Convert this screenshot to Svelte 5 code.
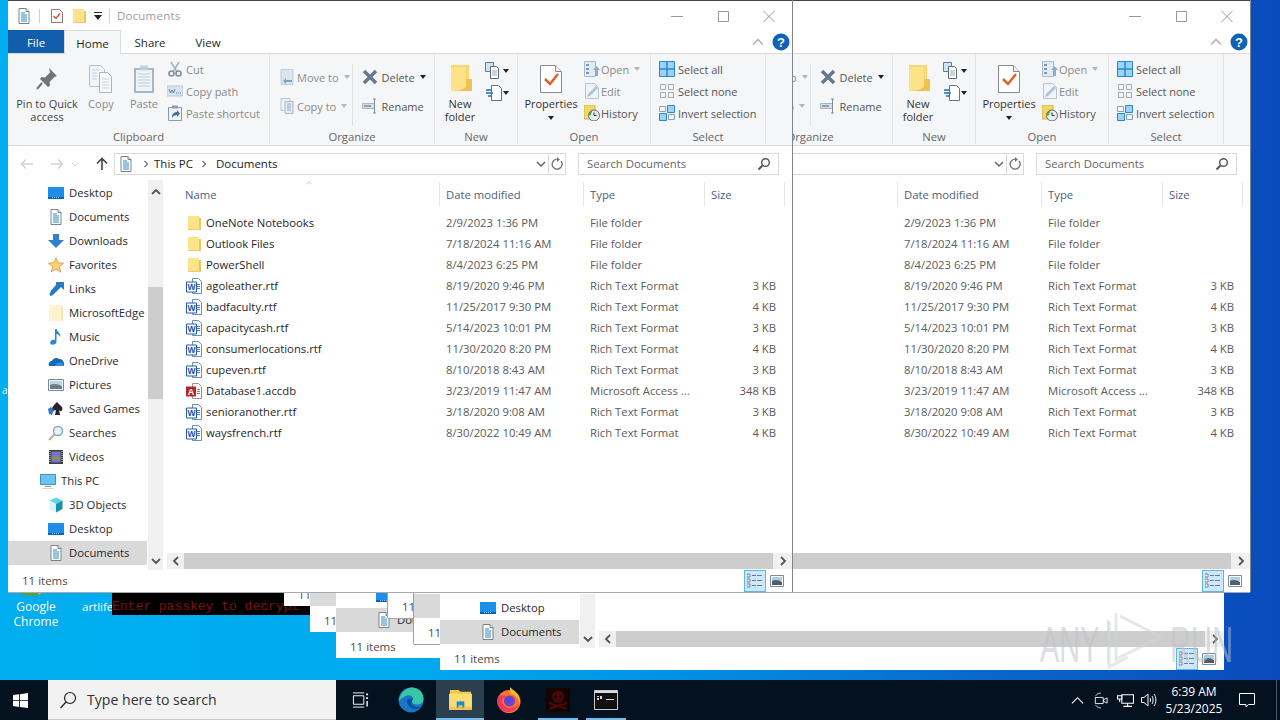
<script>
  // cascade of explorer windows, back to front.
  // lite: only the bottom strip shows below the big windows, back: sits behind the front one
  const windows = [
    { x: 284, y: 14, cls: 'lite', lite: true },
    { x: 310, y: 40, cls: 'lite', lite: true },
    { x: 336, y: 66, cls: 'lite', lite: true },
    { x: 388, y: 26, cls: 'lite edged', lite: true },
    { x: 414, y: 52, cls: 'lite edged', lite: true },
    { x: 440, y: 78, cls: 'lite', lite: true },
    { x: 466, y: 0, cls: 'top', back: true },
    { x: 8, y: 0, cls: 'top' }
  ];

  const navItems = [
    { label: 'Desktop', icon: 'i-desktop' },
    { label: 'Documents', icon: 'i-doc' },
    { label: 'Downloads', icon: 'i-down' },
    { label: 'Favorites', icon: 'i-star' },
    { label: 'Links', icon: 'i-links' },
    { label: 'MicrosoftEdge', icon: 'i-paleFolder' },
    { label: 'Music', icon: 'i-music' },
    { label: 'OneDrive', icon: 'i-cloud' },
    { label: 'Pictures', icon: 'i-pictures' },
    { label: 'Saved Games', icon: 'i-games' },
    { label: 'Searches', icon: 'i-search2' },
    { label: 'Videos', icon: 'i-videos' },
    { label: 'This PC', icon: 'i-pc', root: true },
    { label: '3D Objects', icon: 'i-cube' },
    { label: 'Desktop', icon: 'i-desktop' },
    { label: 'Documents', icon: 'i-doc', selected: true }
  ];

  const rtf = 'Rich Text Format';
  const files = [
    { name: 'OneNote Notebooks', date: '2/9/2023 1:36 PM', type: 'File folder', size: '', icon: 'i-folder' },
    { name: 'Outlook Files', date: '7/18/2024 11:16 AM', type: 'File folder', size: '', icon: 'i-folder' },
    { name: 'PowerShell', date: '8/4/2023 6:25 PM', type: 'File folder', size: '', icon: 'i-folder' },
    { name: 'agoleather.rtf', date: '8/19/2020 9:46 PM', type: rtf, size: '3 KB', icon: 'i-rtf' },
    { name: 'badfaculty.rtf', date: '11/25/2017 9:30 PM', type: rtf, size: '4 KB', icon: 'i-rtf' },
    { name: 'capacitycash.rtf', date: '5/14/2023 10:01 PM', type: rtf, size: '3 KB', icon: 'i-rtf' },
    { name: 'consumerlocations.rtf', date: '11/30/2020 8:20 PM', type: rtf, size: '4 KB', icon: 'i-rtf' },
    { name: 'cupeven.rtf', date: '8/10/2018 8:43 AM', type: rtf, size: '3 KB', icon: 'i-rtf' },
    { name: 'Database1.accdb', date: '3/23/2019 11:47 AM', type: 'Microsoft Access ...', size: '348 KB', icon: 'i-access' },
    { name: 'senioranother.rtf', date: '3/18/2020 9:08 AM', type: rtf, size: '3 KB', icon: 'i-rtf' },
    { name: 'waysfrench.rtf', date: '8/30/2022 10:49 AM', type: rtf, size: '4 KB', icon: 'i-rtf' }
  ];
</script>

{#snippet ic(name, w, h = w)}
  <svg class="ic" width={w} height={h}><use href={'#' + name} /></svg>
{/snippet}

{#snippet smallBtn(icon, label)}
  <div class="small">
    <span class="small-ic">{@render ic(icon, 16)}</span>
    <span>{label}</span>
  </div>
{/snippet}

{#snippet explorer(w)}
  <section class="win {w.cls}" style="left:{w.x}px;top:{w.y}px">
    {#if !w.lite}
      <header class="title">
        {#if !w.back}
          <span class="q first">{@render ic('i-doc', 16)}</span>
          <i class="tsep a"></i>
          <span class="q">{@render ic('i-check', 16)}</span>
          <span class="q">{@render ic('i-folder', 16)}</span>
          <span class="q qarrow">{@render ic('i-qat', 8)}</span>
          <i class="tsep"></i>
          <span class="title-text">Documents</span>
        {/if}
        <div class="controls">
          {@render ic('c-min', 46, 30)}
          {@render ic('c-max', 46, 30)}
          {@render ic('c-close', 46, 30)}
        </div>
      </header>

      <nav class="tabs">
        {#if !w.back}
          <span class="tab file">File</span>
          <span class="tab home">Home</span>
          <span class="tab">Share</span>
          <span class="tab">View</span>
        {/if}
        <span class="tabs-right">
          {@render ic('c-up', 12)}
          {@render ic('i-help', 18)}
        </span>
      </nav>

      <div class="ribbon">
        <div class="group g-clip">
          {#if !w.back}
            <div class="body">
              <div class="large w-pin">
                {@render ic('r-pin', 24, 30)}
                <span class="ll">Pin to Quick<br />access</span>
              </div>
              <div class="large w-copy dim">
                {@render ic('r-copy', 28, 30)}
                <span class="ll">Copy</span>
              </div>
              <div class="large w-paste dim">
                {@render ic('r-paste', 24, 30)}
                <span class="ll">Paste</span>
              </div>
              <div class="stack dim">
                {@render smallBtn('r-cut', 'Cut')}
                {@render smallBtn('r-path', 'Copy path')}
                {@render smallBtn('r-shortcut', 'Paste shortcut')}
              </div>
            </div>
            <div class="label">Clipboard</div>
          {/if}
        </div>

        <div class="group g-org">
          <div class="body">
            <div class="two dim col-move">
              <div class="small">{@render ic('r-move', 14, 16)}<span class="tx">Move to</span><span class="mini up"></span></div>
              <div class="small">{@render ic('r-copyto', 14, 16)}<span class="tx">Copy to</span><span class="mini up"></span></div>
            </div>
            <i class="inner-sep"></i>
            <div class="two col-del">
              <div class="small">{@render ic('r-del', 16)}<span class="tx">Delete</span><span class="mini"></span></div>
              <div class="small">{@render ic('r-rename', 16)}<span class="tx">Rename</span></div>
            </div>
          </div>
          <div class="label">Organize</div>
        </div>

        <div class="group g-new">
          <div class="body">
            <div class="large w-new">
              {@render ic('r-newfolder', 26, 30)}
              <span class="ll dark">New<br />folder</span>
            </div>
            <div class="newitems">
              <div class="ni">{@render ic('r-newitem', 18)}<span class="mini black"></span></div>
              <div class="ni">{@render ic('r-easy', 18)}<span class="mini black"></span></div>
            </div>
          </div>
          <div class="label">New</div>
        </div>

        <div class="group g-open">
          <div class="body">
            <div class="large w-prop">
              {@render ic('r-prop', 24, 30)}
              <span class="ll dark">Properties</span>
              <span class="mini black prop-arrow"></span>
            </div>
            <div class="stack">
              <div class="small dim"><span class="small-ic">{@render ic('r-open', 16)}</span><span>Open</span><span class="mini up"></span></div>
              <div class="small dim"><span class="small-ic">{@render ic('r-edit', 16)}</span><span>Edit</span></div>
              <div class="small"><span class="small-ic">{@render ic('r-history', 16)}</span><span>History</span></div>
            </div>
          </div>
          <div class="label">Open</div>
        </div>

        <div class="group g-select">
          <div class="body">
            <div class="stack">
              {@render smallBtn('r-all', 'Select all')}
              {@render smallBtn('r-none', 'Select none')}
              {@render smallBtn('r-invert', 'Invert selection')}
            </div>
          </div>
          <div class="label">Select</div>
        </div>
      </div>

      <div class="addr">
        <div class="arrows">
          {@render ic('a-back', 16)}
          {@render ic('a-fwd', 16)}
          {@render ic('a-drop', 10)}
          {@render ic('a-up', 16)}
        </div>
        <div class="crumb">
          {#if !w.back}
            {@render ic('i-doc', 16)}
            <span class="gt">{@render ic('a-gt', 8)}</span>
            <span>This PC</span>
            <span class="gt">{@render ic('a-gt', 8)}</span>
            <span>Documents</span>
          {/if}
          <span class="crumb-drop">{@render ic('a-chev', 12)}</span>
        </div>
        <div class="refresh">{@render ic('a-refresh', 14)}</div>
        <div class="search">
          <span>Search Documents</span>
          {@render ic('a-mag', 14)}
        </div>
      </div>
    {/if}

    <div class="main">
      <aside class="nav">
        {#each w.lite ? navItems.slice(-2) : w.back ? [] : navItems as item}
          <div class="nav-row" class:root={item.root} class:sel={item.selected}>
            {@render ic(item.icon, 16)}
            <span>{item.label}</span>
          </div>
        {/each}
      </aside>
      <div class="vscroll">
        <span class="sb-arrow vup">{@render ic('s-up', 10)}</span>
        <span class="vtrack"><i class="vthumb"></i></span>
        <span class="sb-arrow vdown">{@render ic('s-down', 10)}</span>
      </div>
      <div class="list">
        {#if !w.lite}
          <div class="list-head">
            <span class="col name-col">
              {#if !w.back}Name<i class="sort">{@render ic('c-up', 10, 6)}</i>{/if}
            </span>
            <span class="col">Date modified</span>
            <span class="col">Type</span>
            <span class="col">Size</span>
          </div>
        {/if}
        <div class="rows">
          {#each w.lite ? [] : files as f}
            <div class="row">
              <span class="name">
                {#if !w.back}{@render ic(f.icon, 16)}<span>{f.name}</span>{/if}
              </span>
              <span class="soft">{f.date}</span>
              <span class="soft">{f.type}</span>
              <span class="soft size">{f.size}</span>
            </div>
          {/each}
        </div>
        <div class="hscroll">
          <span class="sb-arrow h">{@render ic('s-left', 10)}</span>
          <span class="htrack"></span>
          <span class="sb-arrow h last">{@render ic('s-right', 10)}</span>
        </div>
      </div>
    </div>

    <footer class="status">
      <span class="count">11 items</span>
      <div class="views">
        <span class="view on">{@render ic('v-details', 16)}</span>
        <span class="view">{@render ic('v-large', 16)}</span>
      </div>
    </footer>
  </section>
{/snippet}

<svg class="sprite" width="0" height="0" aria-hidden="true">
  <defs>
    <symbol id="i-doc" viewBox="0 0 16 16">
      <path d="M3 .5h7l3 3v12H3z" fill="#fff" stroke="#76848f" />
      <path d="M10 .5v3h3" fill="#dfe6ec" stroke="#76848f" />
      <path d="M5 5h4M5 7h6M5 9h6M5 11h6M5 13h6" stroke="#2f86c9" />
    </symbol>
    <symbol id="i-check" viewBox="0 0 16 16">
      <path d="M2.5 1.5h8l3 3v10h-11z" fill="#fff" stroke="#8f7a7a" />
      <path d="M4.5 8L7 10.5l4-5" fill="none" stroke="#e0533c" stroke-width="1.5" />
    </symbol>
    <symbol id="i-qat" viewBox="0 0 8 8">
      <path d="M0 0h8v1H0zM0 3h8L4 8z" fill="#222" />
    </symbol>
    <symbol id="i-folder" viewBox="0 0 16 16">
      <path d="M2 1h11v14H2z" fill="#fde489" />
      <path d="M13 3h2v12h-2z" fill="#e8c866" />
      <path d="M2 14h13v1H2z" fill="#eacb6a" />
    </symbol>
    <symbol id="i-paleFolder" viewBox="0 0 16 16">
      <path d="M1 0h13v16H1z" fill="#fdf3cd" />
      <path d="M13 2h2v14h-2z" fill="#f3e6b9" />
    </symbol>
    <symbol id="i-desktop" viewBox="0 0 16 16">
      <path d="M0 2h16v12H0z" fill="#1c8fe8" />
      <path d="M0 12h16v2H0z" fill="#0e63b4" />
      <path d="M4 12.5h8" stroke="#8cc8f5" stroke-dasharray="1 1" />
    </symbol>
    <symbol id="i-down" viewBox="0 0 16 16">
      <path d="M5 1h6v6h5l-8 8-8-8h5z" fill="#2f80cf" />
    </symbol>
    <symbol id="i-star" viewBox="0 0 16 16">
      <path d="M8 .7l2.2 5 5.4.5-4.1 3.6 1.3 5.4L8 12.1 3.2 15l1.3-5.4L.4 6.2l5.4-.5z" fill="#fbd27a" stroke="#d99a3a" stroke-width=".8" />
    </symbol>
    <symbol id="i-links" viewBox="0 0 16 16">
      <path d="M8 1h8v8l-3-3-5 5c-2 2-3 3-5 4-1 0-2-1-1-3 1-3 4-6 6-8z" fill="#2878c4" />
    </symbol>
    <symbol id="i-music" viewBox="0 0 16 16">
      <path d="M7 0h1.5c.5 3 5 4 3.5 8-.5-2-2-3-3.500-3v8c0 2-3 3-5 2.500S2 12 4 11c1-.5 2-.5 3 0z" fill="#2b86d5" />
    </symbol>
    <symbol id="i-cloud" viewBox="0 0 16 16">
      <path d="M1 13c-1-3 1-5 3-5 1-3 5-4 7-2 2-.5 4 1 5 4v3z" fill="#1468b8" />
      <path d="M7 13c0-2 1-3 3-3 1-1.500 4-1 5 1l1 2z" fill="#2f8fdc" />
    </symbol>
    <symbol id="i-pictures" viewBox="0 0 16 16">
      <path d="M.5 2.500h15v11H.5z" fill="#f3f5f6" stroke="#7f8a92" />
      <path d="M2 4h12v4H2z" fill="#b9d6ea" />
      <path d="M2 8c4-2 8-1 12 1v3H2z" fill="#6d7b86" />
    </symbol>
    <symbol id="i-games" viewBox="0 0 16 16">
      <path d="M9 1l5 5c1 2 0 5-2 4l-1-1 1 5H7l1-5c-2 1-4 1-4-1s2-4 5-7z" fill="#26262a" />
      <path d="M0 8l3-2 3 3-2 5-3-1z" fill="#3b78c4" />
    </symbol>
    <symbol id="i-search2" viewBox="0 0 16 16">
      <circle cx="10" cy="6" r="4.500" fill="#e8f2f9" stroke="#8aa3b6" stroke-width="1.400" />
      <path d="M6.500 9.500L1 15" stroke="#b8b09a" stroke-width="2" />
    </symbol>
    <symbol id="i-videos" viewBox="0 0 16 16">
      <path d="M1 1h14v14H1z" fill="#3c3c46" />
      <path d="M3.500 2.500h9v11h-9z" fill="#7c74c4" />
      <path d="M3.500 8h9v3h-9z" fill="#7f9460" />
      <path d="M2 2v12M14 2v12" stroke="#dcdcdc" stroke-dasharray="1 1" />
    </symbol>
    <symbol id="i-pc" viewBox="0 0 16 16">
      <path d="M.5 1.500h15v10H.5z" fill="#6cc4f2" stroke="#3f8dc4" />
      <path d="M5 13h6v1H5z" fill="#8d98a0" />
      <path d="M2 15h12v1H2z" fill="#cfd6db" />
    </symbol>
    <symbol id="i-cube" viewBox="0 0 16 16">
      <path d="M8 .5L1.500 3.500 8 7l6.500-3.500z" fill="#63d4e6" />
      <path d="M1.500 3.500V12L8 15.500V7z" fill="#d8f2f6" />
      <path d="M14.500 3.500V12L8 15.500V7z" fill="#1791ad" />
    </symbol>
    <symbol id="i-rtf" viewBox="0 0 16 16">
      <path d="M6.500 .5h6l3 3v12h-9z" fill="#fff" stroke="#6f8fb5" />
      <path d="M11 6.500h3M11 8.500h3M11 10.500h3" stroke="#4a7cbb" />
      <path d="M.5 4h10v10H.5z" fill="#fff" stroke="#1f5cb8" />
      <text x="5.500" y="12" font-family="Liberation Sans" font-weight="700" font-size="8.500" text-anchor="middle" fill="#1b4ea6">W</text>
    </symbol>
    <symbol id="i-access" viewBox="0 0 16 16">
      <path d="M6.500 .5h6l3 3v12h-9z" fill="#fff" stroke="#a28e8e" />
      <path d="M11 6.500h3M11 8.500h3M11 10.500h3" stroke="#bb6a6a" />
      <path d="M0 3.500h10v10H0z" fill="#b0282c" />
      <text x="5" y="11.700" font-family="Liberation Sans" font-weight="700" font-size="9" text-anchor="middle" fill="#fff">A</text>
    </symbol>

    <symbol id="c-min" viewBox="0 0 46 30"><path d="M17 15.500h12" stroke="#999" /></symbol>
    <symbol id="c-max" viewBox="0 0 46 30"><path d="M18.500 10.500h10v10h-10z" fill="none" stroke="#999" /></symbol>
    <symbol id="c-close" viewBox="0 0 46 30"><path d="M17.500 10l11 11M28.500 10l-11 11" stroke="#999" /></symbol>
    <symbol id="c-up" viewBox="0 0 12 12"><path d="M1 8.500l5-5 5 5" fill="none" stroke="#aaa" stroke-width="1.300" /></symbol>
    <symbol id="i-help" viewBox="0 0 18 18">
      <circle cx="9" cy="9" r="8.500" fill="#0f62b5" />
      <text x="9" y="13.500" font-family="Liberation Sans" font-weight="700" font-size="13" text-anchor="middle" fill="#fff">?</text>
    </symbol>

    <symbol id="r-pin" viewBox="0 0 24 30">
      <path d="M14 4l8 8-2.500 1-5 5 .5 3.500-2 1.500-8-8 1.500-2 3.500.5 5-5z" fill="#747474" />
      <path d="M7 19l-5 6" stroke="#747474" stroke-width="2" />
    </symbol>
    <symbol id="r-copy" viewBox="0 0 28 30">
      <path d="M2.500 1.500h11l4 4v17h-15z" fill="#f1f5f9" stroke="#b3bfcc" />
      <path d="M12.500 8.500h8l4 4v16h-12z" fill="#f7f9fb" stroke="#a6b5c5" />
      <path d="M5 6h7M5 9h5M5 12h5M5 15h5M15 15h7M15 18h7M15 21h7M15 24h7" stroke="#c6d1dc" />
    </symbol>
    <symbol id="r-paste" viewBox="0 0 24 30">
      <path d="M2 4h20v25H2z" fill="#a9b8c9" />
      <path d="M4 6h16v21H4z" fill="#eef3f8" />
      <path d="M8 1.500h8v5H8z" fill="#c6ced7" />
      <path d="M6 10h12M6 13h12M6 16h12M6 19h12M6 22h12" stroke="#c3cfdc" />
    </symbol>
    <symbol id="r-cut" viewBox="0 0 16 16">
      <path d="M4 1l5.500 9M12 1L6.500 10" stroke="#a5b5c6" stroke-width="1.600" />
      <circle cx="4.500" cy="12.500" r="2.500" fill="none" stroke="#7f8e9c" stroke-width="1.600" />
      <circle cx="11.500" cy="12.500" r="2.500" fill="none" stroke="#7f8e9c" stroke-width="1.600" />
    </symbol>
    <symbol id="r-path" viewBox="0 0 16 16">
      <path d="M0 3h16v10H0z" fill="#d8e4ef" stroke="#b6c7d7" />
      <path d="M2 6l1.500 4L5 7l1.500 3L8 6" fill="none" stroke="#5d7f9e" />
      <path d="M9 10h1M11 10h1M13 10h1" stroke="#5d7f9e" />
    </symbol>
    <symbol id="r-shortcut" viewBox="0 0 16 16">
      <path d="M1.500 2.500h13v13h-13z" fill="#eef3f8" stroke="#8a9bad" />
      <path d="M5 .5h6v3H5z" fill="#8f9eae" />
      <path d="M5 13c0-4 2-6 5-6V5l3 3.500L10 12v-2c-2 0-4 1-5 3z" fill="#4a6f94" />
    </symbol>
    <symbol id="r-move" viewBox="0 0 14 16">
      <path d="M1 .5h12v15H1z" fill="#dce4ec" stroke="#c3cfdb" />
      <path d="M12 11H6V9l-3 3 3 3v-2h6z" fill="#7f9fbd" />
    </symbol>
    <symbol id="r-copyto" viewBox="0 0 14 16">
      <path d="M1 .5h9v12H1z" fill="#eef3f8" stroke="#b9c6d3" />
      <path d="M5 3.500h8v12H5z" fill="#e3eaf1" stroke="#a8b8c8" />
      <path d="M7 6h4M7 8h4M7 10h4M7 12h4" stroke="#9cb0c4" />
    </symbol>
    <symbol id="r-del" viewBox="0 0 16 16">
      <path d="M2 2l12 12M14 2L2 14" stroke="#64798d" stroke-width="3.500" />
    </symbol>
    <symbol id="r-rename" viewBox="0 0 16 16">
      <path d="M.5 5.500h12v5H.5z" fill="#d7dfe7" stroke="#a8b4c0" />
      <path d="M2 8h7" stroke="#8f9fae" stroke-width="2" />
      <path d="M11 1h3M12.500 1v14M11 15h3" stroke="#7f8e9c" />
    </symbol>
    <symbol id="r-newfolder" viewBox="0 0 26 30">
      <path d="M4 1h18v26H4z" fill="#fbd772" />
      <path d="M4 3h15v24H4z" fill="#fde287" />
      <path d="M19 15h6v12H5c5 0 10-1 14-4z" fill="#ecc254" />
    </symbol>
    <symbol id="r-newitem" viewBox="0 0 18 18">
      <path d="M.5.500h8v9h-8z" fill="#cfe3f2" stroke="#5d7f9e" />
      <path d="M5.500 4.500h6l2 2v10h-8z" fill="#fff" stroke="#5d6a76" />
      <path d="M7 9h5M7 11h5M7 13h5" stroke="#9aa6b1" />
    </symbol>
    <symbol id="r-easy" viewBox="0 0 18 18">
      <path d="M6.500 1.500h7l3 3v12h-10z" fill="#fff" stroke="#67737d" />
      <path d="M1 6h5M1 9h7M3 12h4" stroke="#1f6fb8" stroke-width="1.300" />
    </symbol>
    <symbol id="r-prop" viewBox="0 0 24 30">
      <path d="M1.500 1.500h15l6 6v21h-21z" fill="#fff" stroke="#8a8a8a" />
      <path d="M16.500 1.500v6h6" fill="#eef0f2" stroke="#8a8a8a" />
      <path d="M6 15l5 5 8-10" fill="none" stroke="#e0602c" stroke-width="2.500" />
    </symbol>
    <symbol id="r-open" viewBox="0 0 16 16">
      <path d="M.5.500h11v15H.5z" fill="#e2eaf2" stroke="#a9bacb" />
      <path d="M2 3h3v2H2zM2 7h3v2H2zM2 11h3v2H2z" fill="#7d98b2" />
      <path d="M11 15V9H9l3.500-4L16 9h-2v6z" fill="#8faac4" />
    </symbol>
    <symbol id="r-edit" viewBox="0 0 16 16">
      <path d="M1.500.5h9l4 4v11h-13z" fill="#eff4f9" stroke="#b6c6d6" />
      <path d="M3 14l1-3 8-8 2 2-8 8z" fill="#aac4de" />
    </symbol>
    <symbol id="r-history" viewBox="0 0 16 16">
      <path d="M0 0h11v14H0z" fill="#f6d668" stroke="#d4b44a" />
      <circle cx="10" cy="10.500" r="5.500" fill="#e8ecef" stroke="#5d6a76" />
      <path d="M4.500 10.500c0-3 2-5 4-5l-2 5z" fill="#49a63c" />
      <path d="M10 7.500v3h2.500" fill="none" stroke="#333" />
    </symbol>
    <symbol id="r-all" viewBox="0 0 16 16">
      <path d="M.5.500h15v15H.5z" fill="#9ad3f7" stroke="#2b86d0" />
      <path d="M8 .5v15M.5 8h15" stroke="#2b86d0" stroke-width="1.500" />
    </symbol>
    <symbol id="r-none" viewBox="0 0 16 16">
      <path d="M1.500 1.500h5v5h-5zM9.500 1.500h5v5h-5zM1.500 9.500h5v5h-5zM9.500 9.500h5v5h-5z" fill="none" stroke="#a9a9a9" />
    </symbol>
    <symbol id="r-invert" viewBox="0 0 16 16">
      <path d="M.5 1.500h6v5h-6zM9.500 9.500h6v5h-6z" fill="none" stroke="#8aa2b8" />
      <path d="M8.500.5h7v7h-7zM.5 8.500h7v7h-7z" fill="#9ad3f7" stroke="#2b86d0" />
    </symbol>

    <symbol id="a-back" viewBox="0 0 16 16"><path d="M14 8H3M7 3.500L2.500 8 7 12.500" fill="none" stroke="#d2d2d2" stroke-width="1.400" /></symbol>
    <symbol id="a-fwd" viewBox="0 0 16 16"><path d="M2 8h11M9 3.500L13.500 8 9 12.500" fill="none" stroke="#d2d2d2" stroke-width="1.400" /></symbol>
    <symbol id="a-drop" viewBox="0 0 10 10"><path d="M2 4l3 3 3-3" fill="none" stroke="#d2d2d2" /></symbol>
    <symbol id="a-up" viewBox="0 0 16 16"><path d="M8 14V3M3 7.500L8 2.500l5 5" fill="none" stroke="#454545" stroke-width="1.600" /></symbol>
    <symbol id="a-gt" viewBox="0 0 8 8"><path d="M2.500 1L5.500 4 2.500 7" fill="none" stroke="#777" stroke-width="1.400" /></symbol>
    <symbol id="a-chev" viewBox="0 0 12 12"><path d="M2 4l4 4 4-4" fill="none" stroke="#666" stroke-width="1.500" /></symbol>
    <symbol id="a-refresh" viewBox="0 0 14 14">
      <path d="M11 4a5 5 0 1 1-3-1.800" fill="none" stroke="#777" stroke-width="1.400" />
      <path d="M7 0l3 2.500L7 5z" fill="#777" />
    </symbol>
    <symbol id="a-mag" viewBox="0 0 14 14">
      <circle cx="8.500" cy="5.500" r="3.800" fill="none" stroke="#555" stroke-width="1.400" />
      <path d="M5.500 8.500L1.500 12.500" stroke="#555" stroke-width="2" />
    </symbol>

    <symbol id="s-up" viewBox="0 0 10 10"><path d="M1 7l4-4 4 4" fill="none" stroke="#555" stroke-width="1.800" /></symbol>
    <symbol id="s-down" viewBox="0 0 10 10"><path d="M1 3l4 4 4-4" fill="none" stroke="#555" stroke-width="1.800" /></symbol>
    <symbol id="s-left" viewBox="0 0 10 10"><path d="M7 1L3 5l4 4" fill="none" stroke="#555" stroke-width="1.800" /></symbol>
    <symbol id="s-right" viewBox="0 0 10 10"><path d="M3 1l4 4-4 4" fill="none" stroke="#555" stroke-width="1.800" /></symbol>

    <symbol id="v-details" viewBox="0 0 16 16">
      <path d="M0 1h3v3H0zM0 6h3v3H0zM0 11h3v3H0z" fill="#fff" stroke="#667" stroke-width=".8" />
      <path d="M5 2.500h4M10 2.500h5M5 7.500h4M10 7.500h5M5 12.500h4M10 12.500h5" stroke="#778" />
    </symbol>
    <symbol id="v-large" viewBox="0 0 16 16">
      <path d="M1.500 2.500h13v11h-13z" fill="#fff" stroke="#7f8a92" />
      <path d="M3 4h10v4H3z" fill="#a9d0ea" />
      <path d="M3 8c3-2 7-1 10 1v3H3z" fill="#4d5f6e" />
    </symbol>

    <symbol id="t-start" viewBox="0 0 16 16">
      <path d="M0 2.200l6.500-.9v6.300H0zM7.400 1.200L16 0v7.600H7.400zM0 8.500h6.500v6.300L0 13.900zM7.400 8.500H16V16l-8.600-1.200z" fill="#fff" />
    </symbol>
    <symbol id="t-mag" viewBox="0 0 18 18">
      <circle cx="11" cy="7" r="5.500" fill="none" stroke="#222" stroke-width="1.200" />
      <path d="M7 11l-5.500 6" stroke="#222" stroke-width="1.300" />
    </symbol>
    <symbol id="t-view" viewBox="0 0 18 16">
      <path d="M1 .5h12M1 15.500h12" stroke="#fff" />
      <path d="M1.500 3.500h11v9h-11z" fill="none" stroke="#fff" />
      <path d="M15 1h2v2h-2zM15 5h2v2h-2z" fill="#fff" />
      <path d="M16 9v6" stroke="#fff" stroke-width="1.500" />
    </symbol>
    <symbol id="t-edge" viewBox="0 0 26 26">
      <circle cx="13" cy="13" r="12.500" fill="#1a76c6" />
      <path d="M1 14C2 5 9 .5 14 .5c7 0 11.500 5 11.500 11 0 4-3 6-6.500 6-3 0-5-1-5-3 0-1 1-1.500 1-3 0-2-3-4-6-3-3 1-6 3-8 5.500z" fill="#37c8a8" />
      <path d="M9 13c0 5 3 9 9 9 2 0 4-1 5-2.500-2 1-7 1-9-2-1-2 0-4 1-5.500-2-1-4-.5-6 1z" fill="#0b4f9a" />
    </symbol>
    <symbol id="t-explorer" viewBox="0 0 24 22">
      <path d="M1 1h9l2 2h11v5H1z" fill="#f5c84c" />
      <path d="M0 5h24v17H0z" fill="#fbdc75" />
      <path d="M8 13h8v7H8z" fill="#1f8ad4" />
      <path d="M10 17h4v3h-4z" fill="#f5c84c" />
      <path d="M0 19h24v3H0z" fill="#e6b83c" opacity=".6" />
    </symbol>
    <symbol id="t-fox" viewBox="0 0 24 26">
      <circle cx="12" cy="14.500" r="11.500" fill="#f4742a" />
      <path d="M13 0c2 3 6 3 9 10 1 3 1.500 5 1 7-1-5-5-10-10-10z" fill="#fbb62c" />
      <circle cx="12.500" cy="14" r="5.500" fill="#7b3ed0" />
      <path d="M2 8c2 1 5 0 8 1-3 1-5 3-5 5 0 4 4 7 8 7 3 0 6-1 8-4-1 5-5 8-10 8-6 0-11-5-11-11 0-2 1-4 2-6z" fill="#ee3a5c" />
      <path d="M7 13c1-3 4-4 6-3 2 1 2 3 0 4 0 2-3 2-4 1z" fill="#4f4ad8" />
    </symbol>
    <symbol id="t-skull" viewBox="0 0 24 24">
      <path d="M0 0h24v24H0z" fill="#130303" />
      <path d="M12 3c-4 0-6 2.500-6 5.500 0 2 1 3 2 4v2h8v-2c1-1 2-2 2-4C18 5.500 16 3 12 3z" fill="#4c0808" />
      <path d="M3 15l18 6M21 15L3 21" stroke="#4c0808" stroke-width="2" />
      <circle cx="9.500" cy="8.500" r="1.500" fill="#130303" />
      <circle cx="14.500" cy="8.500" r="1.500" fill="#130303" />
    </symbol>
    <symbol id="t-cmd" viewBox="0 0 24 20">
      <path d="M.5.500h23v19H.5z" fill="#111" stroke="#c9ccd0" />
      <path d="M1 1h22v2H1z" fill="#d8dbdf" />
      <path d="M3 6h2v1H3zM6 6h2v3H6zM3 8h2v2H3zM12 9h8v1h-8z" fill="#d8d8d8" />
    </symbol>
    <symbol id="t-caret" viewBox="0 0 14 14"><path d="M1 10l6-6 6 6" fill="none" stroke="#fff" stroke-width="1.200" /></symbol>
    <symbol id="t-meet" viewBox="0 0 16 18">
      <path d="M8 .5C4 .5 2 3 2 4M8 17.500c-4 0-6-2.500-6-3.500" fill="none" stroke="#ddd" />
      <path d="M1.500 5.500h9v7h-9z" fill="none" stroke="#fff" />
      <path d="M11 8l4-2v6l-4-2z" fill="none" stroke="#fff" />
    </symbol>
    <symbol id="t-net" viewBox="0 0 16 14">
      <path d="M4.500 1.500h11v8h-11zM10 9.500v3M6 12.500h8" fill="none" stroke="#fff" />
      <path d="M.5 2.500h4v3h-4zM2.500 5.500v3" fill="#04111f" stroke="#fff" />
    </symbol>
    <symbol id="t-vol" viewBox="0 0 16 14">
      <path d="M.5 4.500H3L7 1v12L3 9.500H.5z" fill="none" stroke="#fff" />
      <path d="M9 5c.7 1 .7 3 0 4M11 3c1.500 2 1.500 6 0 8M13 1c2.500 3 2.500 9 0 12" fill="none" stroke="#fff" />
    </symbol>
    <symbol id="t-note" viewBox="0 0 16 16">
      <path d="M.5 1.500h15v11H9.500L7 15v-2.500H.5z" fill="none" stroke="#fff" />
    </symbol>
  </defs>
</svg>

<div class="desktop">
  <div class="chrome-edge"></div>
  <span class="clip-a">a</span>
  <div class="shortcut chrome-label">Google<br />Chrome</div>
  <div class="shortcut art-label">artlife</div>
  <div class="console">Enter passkey to decrypt</div>

  {#each windows as w}
    {@render explorer(w)}
  {/each}

  <div class="mark" aria-hidden="true">
    <span class="mark-l">ANY</span>
    <svg class="play" width="60" height="62" viewBox="0 0 60 62">
      <path d="M3 12V58L22 48M10 4V50L55 28 14 7" fill="none" stroke="#cfd3d6" stroke-opacity=".55" stroke-width="3" />
      <path d="M2 10v44" stroke="#cfd3d6" stroke-opacity=".4" stroke-width="2" />
    </svg>
    <span class="mark-r">RUN</span>
  </div>

  <footer class="taskbar">
    <div class="start">{@render ic('t-start', 15)}</div>
    <div class="tsearch">
      {@render ic('t-mag', 18)}
      <span>Type here to search</span>
    </div>
    <div class="tb-icon">{@render ic('t-view', 17, 16)}</div>
    <div class="tb-icon edge">{@render ic('t-edge', 26)}</div>
    <div class="tb-icon active">{@render ic('t-explorer', 23, 21)}</div>
    <div class="tb-icon fox">{@render ic('t-fox', 24, 26)}</div>
    <div class="tb-icon running">{@render ic('t-skull', 24)}</div>
    <div class="tb-icon running">{@render ic('t-cmd', 24, 20)}</div>

    <div class="tray">
      <span class="ti">{@render ic('t-caret', 13)}</span>
      <span class="ti">{@render ic('t-meet', 14, 17)}</span>
      <span class="ti">{@render ic('t-net', 17, 15)}</span>
      <span class="ti">{@render ic('t-vol', 16, 14)}</span>
      <div class="clock"><span>6:39 AM</span><span>5/23/2025</span></div>
      <span class="ti note">{@render ic('t-note', 16)}</span>
    </div>
  </footer>
</div>

<style>
  :global(body) {
    margin: 0;
    overflow: hidden;
  }

  .sprite {
    position: absolute;
  }

  .ic {
    display: block;
    flex: none;
  }

  .desktop {
    position: relative;
    width: 1280px;
    height: 720px;
    overflow: hidden;
    font-family: 'Open Sans', 'Noto Sans', sans-serif;
    font-size: 11.3px;
    color: #1f1f1f;
    background: linear-gradient(90deg, #00adef 0%, #00acef 30%, #0095e5 50%, #0a66cc 78%, #0a4abc 100%);
  }

  /* desktop leftovers behind the windows */
  .chrome-edge {
    position: absolute;
    left: 14px;
    top: 572px;
    width: 34px;
    height: 24px;
    border-radius: 50%;
    background: conic-gradient(#e8a820 0 40%, #55a33c 40% 70%, #e8e8e8 70%);
  }

  .clip-a {
    position: absolute;
    left: 2px;
    top: 383px;
    font-size: 10px;
    color: #dff3ff;
  }

  .shortcut {
    position: absolute;
    color: #fff;
    font-size: 12px;
    line-height: 15px;
    text-align: center;
  }

  .chrome-label {
    left: 8px;
    top: 599px;
    width: 56px;
  }

  .art-label {
    left: 82px;
    top: 599px;
    font-size: 11.5px;
  }

  .console {
    position: absolute;
    left: 112px;
    top: 592px;
    width: 200px;
    height: 23px;
    box-sizing: border-box;
    padding-top: 7px;
    overflow: hidden;
    background: #000;
    color: #7d1212;
    font: 13px 'Liberation Mono', monospace;
    white-space: nowrap;
  }

  /* explorer window */
  .win {
    position: absolute;
    width: 784px;
    height: 592px;
    box-sizing: border-box;
    display: flex;
    flex-direction: column;
    background: #fff;
  }

  .win.top {
    border-top: 1px solid #3a4652;
    box-shadow: 1px 0 0 #80868c, 0 1px 0 #a9a9a9;
  }

  .win.edged {
    box-shadow: -1px 0 0 #a0a0a0, 0 1px 0 #a0a0a0;
  }

  .title {
    flex: none;
    height: 29px;
    display: flex;
    align-items: center;
    color: #9c9c9c;
    font-size: 11.5px;
  }

  .q {
    width: 16px;
    height: 16px;
    margin-left: 6px;
  }

  .q.first {
    margin-left: 8px;
  }

  .q.qarrow {
    width: 8px;
    height: 8px;
    margin-left: 7px;
  }

  .tsep {
    width: 1px;
    height: 14px;
    margin: 0 7px;
    background: #cfcfcf;
  }

  .tsep.a {
    margin-right: 3px;
  }

  .title-text {
    letter-spacing: 0.2px;
  }

  .controls {
    display: flex;
    margin-left: auto;
  }

  .tabs {
    flex: none;
    height: 24px;
    display: flex;
    align-items: stretch;
    border-bottom: 1px solid #dadbdc;
    box-sizing: border-box;
    font-size: 11.5px;
  }

  .tab {
    width: 58px;
    box-sizing: border-box;
    padding-top: 2px;
    display: flex;
    align-items: center;
    justify-content: center;
  }

  .tab.file {
    width: 56px;
    background: #125eac;
    color: #fff;
  }

  .tab.home {
    width: 57px;
    margin-bottom: -1px;
    background: #f5f6f7;
    border: 1px solid #dadbdc;
    border-width: 1px 1px 0 1px;
  }

  .tabs-right {
    display: flex;
    align-items: center;
    gap: 8px;
    margin-left: auto;
    padding-right: 2px;
  }

  .ribbon {
    flex: none;
    height: 92px;
    box-sizing: border-box;
    display: flex;
    background: #f5f6f7;
    border-bottom: 1px solid #dadbdc;
    color: #555;
    font-size: 11px;
  }

  .group {
    display: flex;
    flex-direction: column;
    box-sizing: border-box;
    padding-top: 5px;
    border-right: 1px solid #e2e3e5;
    margin-bottom: 1px;
  }

  .g-clip { width: 262px; }
  .g-org { width: 165px; }
  .g-new { width: 83px; }
  .g-open { width: 133px; }
  .g-select { width: 115px; }

  .body {
    flex: 1;
    display: flex;
    min-height: 0;
  }

  .label {
    height: 14px;
    line-height: 14px;
    text-align: center;
    color: #666;
    font-size: 11.3px;
  }

  .large {
    display: flex;
    flex-direction: column;
    align-items: center;
    padding-top: 5px;
  }

  .ll {
    margin-top: 3px;
    line-height: 13px;
    text-align: center;
    white-space: nowrap;
    color: #444;
  }

  .dark {
    color: #333;
  }

  .dim,
  .dim .ll {
    color: #8a8a8a;
  }

  .w-pin { width: 78px; }
  .w-copy { width: 30px; }
  .w-paste { width: 40px; margin: 0 3px 0 8px; }
  .w-new { width: 50px; }
  .w-prop { width: 66px; }

  .stack {
    display: flex;
    flex-direction: column;
    margin-top: -1px;
    white-space: nowrap;
  }

  .small {
    height: 22px;
    display: flex;
    align-items: center;
    white-space: nowrap;
  }

  .small-ic {
    width: 20px;
  }

  .g-clip .small-ic {
    width: 19px;
  }

  .g-open .small-ic {
    width: 17px;
  }

  .g-select .stack {
    margin-left: 8px;
  }

  .g-select .small-ic {
    width: 19px;
  }

  .two {
    display: flex;
    flex-direction: column;
    gap: 7px;
    padding-top: 7px;
    width: 76px;
  }

  .col-move {
    margin-left: 10px;
  }

  .tx {
    margin-left: 3px;
  }

  .inner-sep {
    width: 1px;
    height: 62px;
    background: #e2e3e5;
    margin: 5px 10px 0 0;
  }

  .mini {
    width: 0;
    height: 0;
    margin-left: 5px;
    border: 3px solid transparent;
    border-top: 4px solid #222;
    border-bottom-width: 0;
  }

  .mini.up {
    border-top-color: #b5b5b5;
  }

  .prop-arrow {
    margin: 6px 0 0;
  }

  .newitems {
    display: flex;
    flex-direction: column;
    gap: 4px;
    margin: 3px 0 0 0;
  }

  .ni {
    display: flex;
    align-items: center;
    height: 18px;
  }

  .ni .mini {
    margin-left: 0;
  }

  .addr {
    flex: none;
    height: 34px;
    display: flex;
    align-items: center;
    padding-top: 1px;
    box-sizing: border-box;
  }

  .arrows {
    width: 106px;
    display: flex;
    align-items: center;
    padding-left: 11px;
    box-sizing: border-box;
  }

  .arrows :global(.ic:nth-child(1)) { margin-right: 14px; }
  .arrows :global(.ic:nth-child(2)) { margin-right: 5px; }
  .arrows :global(.ic:nth-child(3)) { margin-right: 14px; }

  .crumb {
    width: 435px;
    height: 22px;
    box-sizing: border-box;
    display: flex;
    align-items: center;
    padding-left: 3px;
    border: 1px solid #d9d9d9;
    color: #222;
    font-size: 11.5px;
  }

  .gt {
    width: 8px;
    margin: 0 4px 0 8px;
  }

  .crumb span + .gt {
    margin: 0 8px 0 7px;
  }

  .crumb-drop {
    margin-left: auto;
    margin-right: 1px;
  }

  .refresh {
    width: 17px;
    height: 22px;
    box-sizing: border-box;
    display: flex;
    align-items: center;
    justify-content: center;
    border: 1px solid #d9d9d9;
    border-left: 0;
  }

  .search {
    width: 201px;
    height: 22px;
    box-sizing: border-box;
    margin-left: 12px;
    padding: 0 7px 0 8px;
    display: flex;
    align-items: center;
    justify-content: space-between;
    border: 1px solid #d9d9d9;
    color: #666;
  }

  .main {
    flex: 1;
    min-height: 0;
    display: flex;
  }

  .nav {
    width: 139px;
    padding-top: 1px;
    overflow: hidden;
    flex: none;
    margin-right: 1px;
  }

  .nav-row {
    height: 24px;
    box-sizing: border-box;
    padding-bottom: 1px;
    display: flex;
    align-items: center;
    gap: 5px;
    padding-left: 40px;
    white-space: nowrap;
    color: #2a2a2a;
  }

  .nav-row.root {
    padding-left: 32px;
  }

  .nav-row.sel {
    background: #d9d9d9;
  }

  .vscroll {
    width: 15px;
    flex: none;
    display: flex;
    flex-direction: column;
    background: #f0f0f0;
  }

  .sb-arrow {
    display: flex;
    align-items: center;
    justify-content: center;
    flex: none;
  }

  .vup {
    height: 24px;
  }

  .vdown {
    height: 18px;
  }

  .vtrack {
    flex: 1;
    padding-top: 83px;
  }

  .vthumb {
    display: block;
    height: 112px;
    background: #cdcdcd;
  }

  .list {
    flex: 1;
    min-width: 0;
    display: flex;
    flex-direction: column;
    margin-left: 4px;
  }

  .list-head {
    flex: none;
    height: 28px;
    display: grid;
    grid-template-columns: 273px 144px 121px 80px;
    align-items: center;
    color: #4c607a;
    font-size: 11.3px;
  }

  .col {
    height: 24px;
    box-sizing: border-box;
    padding-left: 6px;
    line-height: 26px;
    border-right: 1px solid #e5e5e5;
    position: relative;
  }

  .name-col {
    padding-left: 18px;
  }

  .sort {
    position: absolute;
    left: 137px;
    top: -2px;
  }

  .rows {
    flex: 1;
    padding-top: 4px;
  }

  .row {
    height: 21px;
    display: grid;
    grid-template-columns: 273px 144px 121px 71px;
    align-items: center;
    color: #1f1f1f;
    white-space: nowrap;
  }

  .row > span {
    padding-left: 6px;
  }

  .row > .name {
    display: flex;
    align-items: center;
    gap: 4px;
    padding-left: 19px;
  }

  .soft {
    color: #5b5b5b;
  }

  .row > .size {
    text-align: right;
    padding-left: 0;
  }

  .hscroll {
    flex: none;
    height: 16px;
    margin-bottom: 1px;
    display: flex;
  }

  .sb-arrow.h {
    width: 17px;
    height: 16px;
    background: #f0f0f0;
  }

  .sb-arrow.h.last {
    width: 19px;
  }

  .htrack {
    flex: 1;
    background: #cdcdcd;
  }

  .status {
    flex: none;
    height: 22px;
    display: flex;
    align-items: center;
    justify-content: space-between;
    padding-left: 14px;
    color: #4a4a4a;
    font-size: 11.5px;
  }

  .count {
    margin-top: -2px;
  }

  .views {
    display: flex;
    margin-right: 4px;
  }

  .view {
    width: 22px;
    height: 22px;
    box-sizing: border-box;
    display: flex;
    align-items: center;
    justify-content: center;
  }

  .view.on {
    background: #cce8ff;
    border: 1px solid #5fb6e0;
  }

  /* only the bottom strip of these windows is ever visible */
  .win.lite {
    justify-content: flex-end;
  }

  .win.lite .main {
    flex: none;
    height: 54px;
  }

  .win.lite .nav {
    padding-top: 2px;
  }

  .win.lite .vup,
  .win.lite .vthumb {
    display: none;
  }

  .win.lite .vtrack {
    padding: 0;
  }

  .win.lite .rows {
    padding: 0;
  }

  /* watermark */
  .mark {
    position: absolute;
    left: 1040px;
    top: 608px;
    width: 200px;
    height: 64px;
    display: flex;
    align-items: center;
    gap: 4px;
    font-family: 'Liberation Sans', sans-serif;
    font-size: 50px;
    color: rgba(190, 195, 200, 0.55);
  }

  .mark-l,
  .mark-r {
    display: inline-block;
    width: 60px;
    padding-top: 10px;
    transform: scaleX(0.58);
    transform-origin: left center;
    white-space: nowrap;
  }

  .mark-l {
    margin-right: 2px;
  }

  .play {
    flex: none;
  }

  /* taskbar */
  .taskbar {
    position: absolute;
    left: 0;
    right: 0;
    bottom: 0;
    height: 40px;
    display: flex;
    align-items: stretch;
    background: #04111f;
    color: #fff;
    font-family: 'Open Sans', sans-serif;
  }

  .taskbar::after {
    content: '';
    position: absolute;
    left: 1276px;
    top: 0;
    bottom: 0;
    width: 1px;
    background: #4a5560;
  }

  .start {
    width: 48px;
    display: flex;
    align-items: center;
    justify-content: center;
    box-sizing: border-box;
    padding-right: 8px;
  }

  .tsearch {
    width: 288px;
    box-sizing: border-box;
    display: flex;
    align-items: center;
    gap: 10px;
    padding-left: 11px;
    background: #f2f2f2;
    border-bottom: 1px solid #c8c8c8;
    color: #333;
    font-size: 14.1px;
  }

  .tb-icon {
    position: relative;
    width: 48px;
    box-sizing: border-box;
    display: flex;
    align-items: center;
    justify-content: center;
  }

  .edge {
    width: 52px;
    padding-left: 1px;
  }

  .fox {
    width: 50px;
  }

  .active {
    background: #2b3f4f;
    border-bottom: 2px solid #76b9ed;
  }

  .running::after {
    content: '';
    position: absolute;
    left: 4px;
    right: 4px;
    bottom: 0;
    height: 2px;
    background: #76b9ed;
  }

  .tray {
    margin-left: auto;
    display: flex;
    align-items: center;
    padding-right: 13px;
    font-size: 12px;
  }

  .ti {
    width: 24px;
    display: flex;
    justify-content: center;
  }

  .clock {
    width: 66px;
    display: flex;
    flex-direction: column;
    align-items: center;
    line-height: 17px;
  }

  .note {
    width: 40px;
  }
</style>
